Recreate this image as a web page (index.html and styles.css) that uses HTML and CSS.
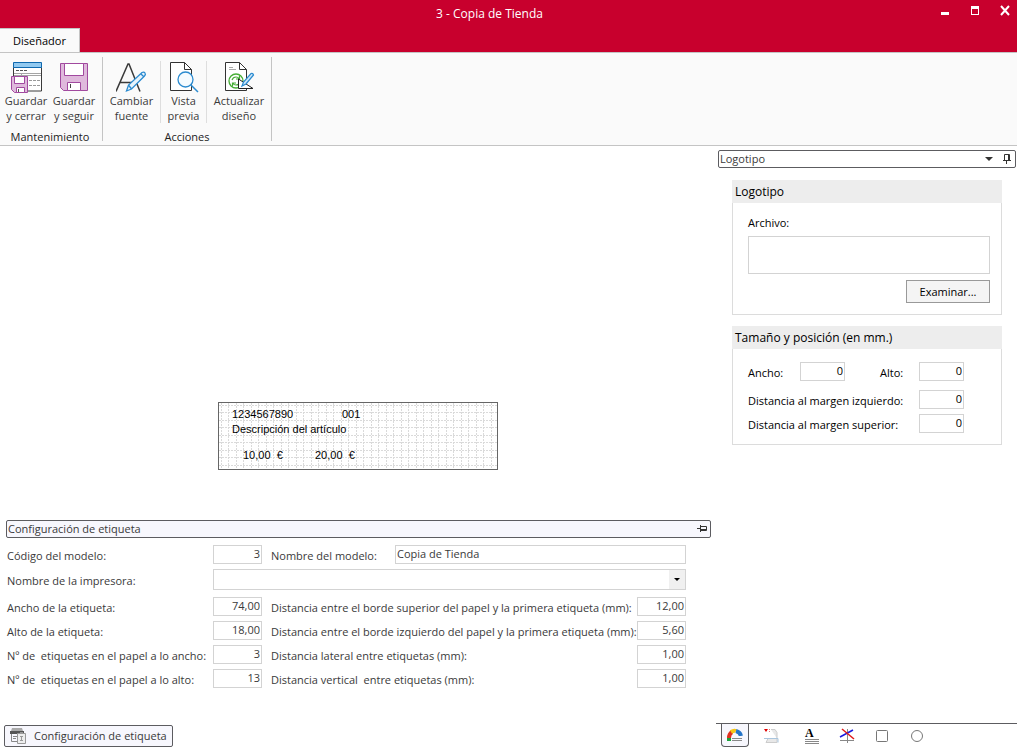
FILE: index.html
```html
<!DOCTYPE html>
<html lang="es">
<head>
<meta charset="utf-8">
<title>3 - Copia de Tienda</title>
<link rel="stylesheet" href="styles.css">
</head>
<body>
<header class="titlebar">
  <h1 class="window-title">3 - Copia de Tienda</h1>
  <div class="window-controls">
    <button class="window-button" aria-label="Minimizar"><svg width="12" height="12"><path d="M2 7h8v3H2z" fill="#fff"/></svg></button>
    <button class="window-button" aria-label="Maximizar"><svg width="12" height="12"><path d="M2 1h8v9H2zM3 4v5h6V4z" fill="#fff" fill-rule="evenodd"/></svg></button>
    <button class="window-button" aria-label="Cerrar"><svg width="12" height="12"><path d="M2 1l8 9M10 1l-8 9" stroke="#fff" stroke-width="2"/></svg></button>
  </div>
  <button class="ribbon-tab">Diseñador</button>
</header>

<nav class="ribbon">
  <section class="ribbon-group">
    <div class="ribbon-actions">
      <button class="action">
        <svg width="32" height="32" fill="none">
          <path d="M3.500 6.500v23.500h28V6.500z" fill="#fff" stroke="#3a3a3a" stroke-width="1"/>
          <path d="M3.500 1.500h28v5h-28z" fill="#91c9f0" stroke="#0f68ae"/>
          <path d="M6 9.500h12" stroke="#555" stroke-dasharray="3 1"/>
          <path d="M4 12.500h27M4 14.500h27M11.500 12v4" stroke="#a5a5a5"/>
          <path d="M19 19.500h11M19 24.500h11" stroke="#999" stroke-dasharray="3 1"/>
          <path d="M1.500 15.500h16v16h-13l-3-3z" fill="#dfb9dc" stroke="#a1499f"/>
          <path d="M4.500 15.500h10v7h-10zM6.500 31.500v-5h8v5z" fill="#fff" stroke="#a1499f"/>
          <path d="M8.500 28v3" stroke="#555"/>
        </svg>
        <span>Guardar<br>y cerrar</span>
      </button>
      <button class="action">
        <svg width="32" height="32" fill="none">
          <path d="M2.500 2.500h27v27h-24l-3-3z" fill="#dfb9dc" stroke="#a1499f"/>
          <path d="M6.500 2.500h19v12h-19zM9.500 29.500v-8h13v8z" fill="#fff" stroke="#a1499f"/>
          <path d="M12.500 23v4" stroke="#444"/>
        </svg>
        <span>Guardar<br>y seguir</span>
      </button>
    </div>
    <h2 class="ribbon-caption">Mantenimiento</h2>
  </section>
  <section class="ribbon-group">
    <div class="ribbon-actions">
      <button class="action action-wide">
        <svg width="32" height="32" fill="none">
          <path d="M0 30.500L12 3h1L24 30.500M4 21.500h16.500" stroke="#3a3a3a" stroke-width="1.500"/>
          <path d="M10.500 30l2-6L26 11.500q2-1 3 .5 1 1.500-.5 3L15.500 28zM12.500 24l3 4M25 13l3 3" fill="#e7f3fb" stroke="#2b8bd0" stroke-width="1.300"/>
        </svg>
        <span>Cambiar<br>fuente</span>
      </button>
      <button class="action action-narrow">
        <svg width="32" height="32" fill="none">
          <path d="M2.500 1.500h14l7 7v21h-21z" fill="#fff" stroke="#333"/>
          <path d="M16.500 1.500v7h7" stroke="#333"/>
          <circle cx="17.500" cy="18.500" r="7.500" fill="#f5fbff" stroke="#2b8bd0" stroke-width="1.300"/>
          <path d="M23 24l7 7" stroke="#2b8bd0" stroke-width="1.500"/>
        </svg>
        <span>Vista<br>previa</span>
      </button>
      <button class="action action-widest">
        <svg width="32" height="32" fill="none">
          <path d="M2.500 1.500h14l7 7v21h-21z" fill="#fff" stroke="#333"/>
          <path d="M16.500 1.500v7h7" stroke="#333"/>
          <path d="M6 6.500h4M6 8.500h7" stroke="#aaa"/>
          <circle cx="13" cy="20" r="7" fill="#fff" stroke="#45ad35" stroke-width="1.300"/>
          <path d="M9 19q1-3 4-3 2 0 3 1.500M16.500 14.500v3.500h-3.500M17 21q-1 3-4 3-2 0-3-1.500M9.500 25.500V22H13" stroke="#45ad35" stroke-width="1.200"/>
          <path d="M15.500 18v9.500H30z" fill="#fff" stroke="#222"/>
          <path d="M19 25l1.500-4L28 12.500q2-.5 2.500 1.500L23 23z" fill="#cce5f7" stroke="#2b8bd0" stroke-width="1.200"/>
        </svg>
        <span>Actualizar<br>diseño</span>
      </button>
    </div>
    <h2 class="ribbon-caption">Acciones</h2>
  </section>
</nav>

<main class="workspace">
  <section class="designer">
    <div class="canvas">
      <div class="label-card">
        <svg class="label-grid" width="100%" height="100%">
          <defs><pattern id="grid" width="15" height="15" patternUnits="userSpaceOnUse">
            <path d="M2.500 0v15M9.500 0v15M0 2.500h15M0 9.500h15" stroke="#dadada" stroke-dasharray="2 1"/>
          </pattern></defs>
          <rect width="100%" height="100%" fill="url(#grid)"/>
        </svg>
        <span class="field field-code">1234567890</span>
        <span class="field field-size">001</span>
        <span class="field field-description">Descripción del artículo</span>
        <span class="field field-price">10,00 &nbsp;€</span>
        <span class="field field-price-two">20,00 &nbsp;€</span>
      </div>
    </div>
    <section class="config">
      <header class="panel-bar panel-bar-active">
        <h2 class="panel-title">Configuración de etiqueta</h2>
        <button class="bar-button" aria-label="Fijar"><svg width="12" height="12" fill="none"><path d="M1 5.500h3M4.500 2v7M4 3.500h6.500v4H4M4 6.500h6" stroke="#333"/></svg></button>
      </header>
      <form class="config-form">
        <div class="form-row">
          <label for="codigo">Código del modelo:</label>
          <input class="box number" id="codigo" value="3">
          <label class="second name-label" for="nombre">Nombre del modelo:</label>
          <input class="box name-input" id="nombre" value="Copia de Tienda">
        </div>
        <div class="form-row printer-row">
          <label for="impresora">Nombre de la impresora:</label>
          <div class="select-wrap">
            <select class="box printer" id="impresora"><option></option></select>
            <svg class="select-arrow" width="16" height="19"><path d="M5 8h6L8 11z" fill="#000"/></svg>
          </div>
        </div>
        <div class="form-row">
          <label for="ancho-etiqueta">Ancho de la etiqueta:</label>
          <input class="box number" id="ancho-etiqueta" value="74,00">
          <label class="second" for="borde-superior">Distancia entre el borde superior del papel y la primera etiqueta (mm):</label>
          <input class="box number" id="borde-superior" value="12,00">
        </div>
        <div class="form-row">
          <label for="alto-etiqueta">Alto de la etiqueta:</label>
          <input class="box number" id="alto-etiqueta" value="18,00">
          <label class="second" for="borde-izquierdo">Distancia entre el borde izquierdo del papel y la primera etiqueta (mm):</label>
          <input class="box number" id="borde-izquierdo" value="5,60">
        </div>
        <div class="form-row">
          <label for="num-ancho">Nº de &nbsp;etiquetas en el papel a lo ancho:</label>
          <input class="box number" id="num-ancho" value="3">
          <label class="second" for="lateral">Distancia lateral entre etiquetas (mm):</label>
          <input class="box number" id="lateral" value="1,00">
        </div>
        <div class="form-row">
          <label for="num-alto">Nº de &nbsp;etiquetas en el papel a lo alto:</label>
          <input class="box number" id="num-alto" value="13">
          <label class="second" for="vertical">Distancia vertical &nbsp;entre etiquetas (mm):</label>
          <input class="box number" id="vertical" value="1,00">
        </div>
      </form>
    </section>
    <footer class="dock">
      <button class="dock-tab">
        <svg width="18" height="18" fill="none">
          <path d="M3 1h10l1 3H2z" fill="#aaa"/><path d="M1 4h14v3H1z" fill="#555"/>
          <path d="M2.500 7v7.500H8M4 9.500h4M4 11.500h3" stroke="#888"/>
          <path d="M8.500 6.500h8v10h-8z" fill="#eee" stroke="#999"/><path d="M11 5.500h3M11 9.500h3M12.500 9v5M11 13.500h3" stroke="#999"/>
        </svg>
        <span class="dock-label">Configuración de etiqueta</span>
      </button>
    </footer>
  </section>

  <aside class="properties">
    <header class="panel-bar">
      <h2 class="panel-title">Logotipo</h2>
      <button class="bar-button" aria-label="Opciones"><svg width="12" height="12"><path d="M2 4h8L6 8z" fill="#333"/></svg></button>
      <button class="bar-button" aria-label="Fijar"><svg width="12" height="12" fill="none"><path d="M3.500 7V1.500h5V7M7.500 2v5M2 7.500h8M5.500 8v3" stroke="#333"/></svg></button>
    </header>
    <section class="group">
      <h3 class="group-title">Logotipo</h3>
      <div class="group-body file-body">
        <label for="archivo">Archivo:</label>
        <textarea class="box file" id="archivo"></textarea>
        <button class="browse">Examinar...</button>
      </div>
    </section>
    <section class="group">
      <h3 class="group-title">Tamaño y posición (en mm.)</h3>
      <div class="group-body size-body">
        <div class="size-row size-row-pair">
          <label class="width-label" for="ancho">Ancho:</label><input class="box number small" id="ancho" value="0">
          <label class="height-label" for="alto">Alto:</label><input class="box number small" id="alto" value="0">
        </div>
        <div class="size-row"><label for="margen-izquierdo">Distancia al margen izquierdo:</label><input class="box number small" id="margen-izquierdo" value="0"></div>
        <div class="size-row"><label for="margen-superior">Distancia al margen superior:</label><input class="box number small" id="margen-superior" value="0"></div>
      </div>
    </section>
    <nav class="tool-tabs">
      <button class="tool tool-active" aria-label="Logotipo"><svg width="18" height="18" fill="none">
        <path d="M3 15v-4" stroke="#19a33b" stroke-width="4"/><path d="M3 12q0-4 3-6" stroke="#e03020" stroke-width="4"/><path d="M5 6q3-2 5-1" stroke="#f5c518" stroke-width="4"/><path d="M10 5q4 1 5 5" stroke="#2474c8" stroke-width="4"/><path d="M6 10h12v6H6z" fill="#f7f7fd"/><path d="M6 12.500h10M6 14.500h10" stroke="#888"/>
      </svg></button>
      <button class="tool tool-image" aria-label="Imagen"><svg width="16" height="18" fill="none">
        <path d="M0 2h4L2 5z" fill="#e00000"/><path d="M5 2.500h1M5 4.500h1" stroke="#e08080"/><path d="M7 2.500h4l2 3v6H4l-2 4h11v-4" fill="#e8e8e8" stroke="#ccc"/><path d="M0 11.500h14v4" stroke="#a9c5de"/>
      </svg></button>
      <button class="tool" aria-label="Texto"><svg width="16" height="22"><text class="letter" x="1" y="12">A</text><path d="M1 14.500h14M1 16.500h14M1 18.500h14" stroke="#888"/></svg></button>
      <button class="tool" aria-label="Líneas"><svg width="16" height="18" fill="none"><path d="M8.500 2v14M1 13.500h14" stroke="#888"/><path d="M1 10L14 3" stroke="#1a1ae0" stroke-width="1.500"/><path d="M3 2l12 10" stroke="#e01a1a" stroke-width="1.500"/></svg></button>
      <button class="tool" aria-label="Rectángulo"><svg width="14" height="14" fill="none"><rect x="1.500" y="1.500" width="11" height="11" rx="1" stroke="#777"/></svg></button>
      <button class="tool" aria-label="Círculo"><svg width="14" height="14" fill="none"><circle cx="7" cy="7" r="5.500" stroke="#777"/></svg></button>
    </nav>
  </aside>
</main>
</body>
</html>
```
FILE: styles.css
```css
* { box-sizing: border-box; }
body {
  margin: 0;
  min-height: 100vh;
  display: flex;
  flex-direction: column;
  background: #fff;
  color: #3a3a3a;
  font: 11px/15px "Open Sans", "Noto Sans", sans-serif;
}
h1, h2, h3 { margin: 0; font-size: inherit; font-weight: 400; }
button, input, select, textarea { font: inherit; color: inherit; margin: 0; }
button { border: 0; padding: 0; background: none; }
svg { display: block; flex: none; }

.titlebar {
  display: grid;
  grid-template-columns: 1fr auto 1fr;
  grid-template-rows: 28px 24px;
  background: #c8002d;
  color: #fff;
}
.window-title {
  grid-column: 2;
  padding-right: 38px;
  font-size: 12px;
  line-height: 28px;
}
.window-controls {
  display: flex;
  justify-content: flex-end;
  gap: 18px;
  padding: 5px 6px 0 0;
}
.window-button { height: 12px; }
.ribbon-tab {
  grid-row: 2;
  grid-column: 1;
  justify-self: start;
  width: 80px;
  background: #fafafa;
  border: solid #c4c4c4;
  border-width: 1px 1px 0 0;
  color: #000;
}

.ribbon {
  display: flex;
  height: 94px;
  background: #fafafa;
  border-top: 1px solid #c4c4c4;
  border-bottom: 1px solid #c4c4c4;
}
.ribbon-group {
  display: flex;
  flex-direction: column;
  margin: 4px 0;
  padding: 4px 4px 0 2px;
  border-right: 1px solid #c4c4c4;
}
.ribbon-group + .ribbon-group { padding: 4px 0 0; }
.ribbon-actions { display: flex; height: 71px; }
.action {
  display: flex;
  flex-direction: column;
  align-items: center;
  width: 48px;
}
.action-wide { width: 57px; }
.action-narrow {
  width: 47px;
  height: 62px;
  border: solid #dedede;
  border-width: 0 1px;
}
.action-widest { width: 64px; }
.ribbon-caption { line-height: 9px; text-align: center; color: #222; }

.workspace {
  flex: 1;
  display: grid;
  grid-template-columns: minmax(0, 1fr) 301px;
}
.designer {
  display: grid;
  grid-template-columns: minmax(0, 1fr);
  grid-template-rows: 1fr auto;
}
.canvas {
  grid-area: 1 / 1;
  display: grid;
  place-items: center;
}
.label-card {
  position: relative;
  width: 280px;
  height: 68px;
  border: 1px solid #666;
  color: #000;
  font: 11px/13px "Liberation Sans", sans-serif;
}
.label-grid { position: absolute; inset: 0; }
.field { position: absolute; white-space: nowrap; }
.field-code { left: 13px; top: 5px; }
.field-size { left: 123px; top: 5px; }
.field-description { left: 13px; top: 20px; }
.field-price { left: 24px; top: 46px; }
.field-price-two { left: 96px; top: 46px; }

.panel-bar {
  display: flex;
  align-items: center;
  gap: 6px;
  height: 18px;
  padding: 0 2px 0 1px;
  border: 1px solid #5c5c60;
  border-radius: 2px;
}
.panel-bar-active { background: #f7f7fd; }
.panel-title { flex: 1; padding-bottom: 1px; }

.config {
  grid-area: 1 / 1;
  align-self: end;
  padding: 0 5px 37px 6px;
}
.config-form {
  display: flex;
  flex-direction: column;
  gap: 5px;
  padding: 7px 25px 0 1px;
}
.form-row { display: flex; align-items: center; white-space: nowrap; }
.form-row label { padding-top: 2px; }
.form-row > label:first-child { width: 206px; }
.form-row .second { flex: 1; min-width: 0; padding-left: 9px; }
.form-row .name-label { flex: none; width: 133px; }
.form-row .name-input { flex: 1; min-width: 0; }
.printer-row { margin-bottom: 2px; }
.box {
  height: 19px;
  padding: 0 1px 2px;
  background: #fff;
  border: 1px solid #d3d3d3;
  border-radius: 0;
  outline: 0;
}
.number { width: 49px; text-align: right; }
.select-wrap { position: relative; flex: 1; }
.printer { display: block; width: 100%; height: 21px; appearance: none; }
.select-arrow {
  position: absolute;
  top: 1px;
  right: 1px;
  background: #f0f0f0;
  pointer-events: none;
}

.dock { padding: 0 4px 1px; }
.dock-tab {
  display: flex;
  align-items: center;
  gap: 7px;
  height: 22px;
  padding: 0 5px 0 4px;
  border: 1px solid #5c5c60;
  border-radius: 2px;
  background: #f7f7fd;
}
.dock-label { padding-bottom: 1px; }

.properties {
  display: flex;
  flex-direction: column;
  padding-top: 4px;
  color: #000;
}
.properties .panel-bar { margin: 0 1px 12px 2px; color: #3a3a3a; }
.group { margin: 0 15px 11px 16px; }
.group-title {
  height: 23px;
  padding-left: 3px;
  background: #ededed;
  font-size: 12px;
  line-height: 23px;
}
.group-body { border: solid #dcdcdc; border-width: 0 1px 1px; }
.file-body {
  display: flex;
  flex-direction: column;
  gap: 6px;
  padding: 12px 11px 11px 15px;
}
.file { height: 38px; resize: none; }
.browse {
  align-self: flex-end;
  width: 84px;
  height: 23px;
  border: 1px solid #999;
  background: #f4f4f4;
}
.size-body {
  display: flex;
  flex-direction: column;
  gap: 5px;
  padding: 13px 37px 11px 15px;
}
.size-row { display: flex; align-items: center; justify-content: space-between; }
.size-row label { padding-top: 2px; }
.size-row-pair { justify-content: flex-start; margin-bottom: 4px; }
.small { width: 45px; }
.width-label { width: 52px; }
.size-row .height-label { flex: 1; padding-left: 35px; }

.tool-tabs {
  display: flex;
  align-items: flex-start;
  margin-top: auto;
  height: 25px;
  padding-left: 5px;
  border-top: 1px solid #5c5c60;
}
.tool { display: grid; place-items: center; width: 35px; height: 23px; }
.tool-active {
  width: 28px;
  border: solid #5c5c60;
  border-width: 0 1px 1px;
  border-radius: 0 0 4px 4px;
  background: #f7f7fd;
}
.tool-image { width: 45px; }
.letter { font: bold 12px "Liberation Serif", serif; }
```
